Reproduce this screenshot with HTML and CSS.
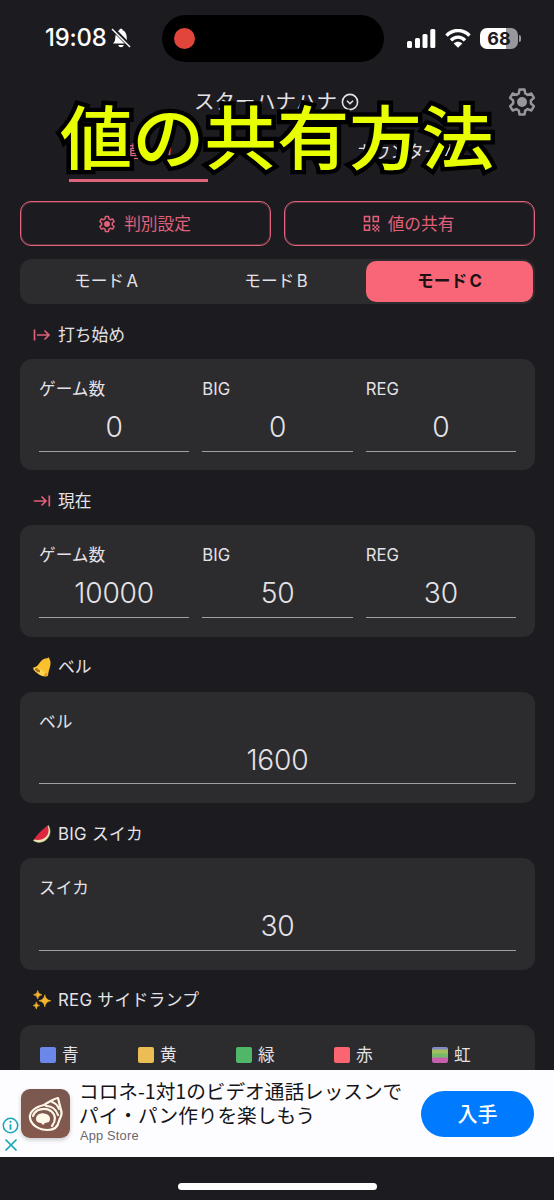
FILE: index.html
```html
<!DOCTYPE html>
<html lang="ja">
<head>
<meta charset="utf-8">
<title>スターハナハナ</title>
<link rel="stylesheet" href="styles.css">
</head>
<body>
<svg class="defs" width="0" height="0">
  <symbol id="gear" viewBox="0 0 24 24">
    <path fill="none" stroke="currentColor" stroke-width="2" stroke-linejoin="round" d="M10 2h4l.6 3.2 1.9 1.1 3-1.1 2 3.5-2.4 2.1v2.4l2.4 2.1-2 3.5-3-1.1-1.900 1.100L14 22h-4l-.6-3.200-1.900-1.100-3 1.100-2-3.500 2.400-2.100v-2.400L2.500 8.700l2-3.500 3 1.100 1.900-1.100z"/>
    <circle cx="12" cy="12" r="4" fill="currentColor"/>
  </symbol>
</svg>
<div class="phone">
  <header class="status">
    <div class="clock">19:08
      <svg width="20" height="22" viewBox="0 0 20 22"><path fill="#fff" d="M2 16.500c2-2 2.200-3.500 2.300-6.500C4.500 6 6.500 3.800 8.300 3.200 8.500 1.300 11.500 1.300 11.700 3.200c2 .7 3.900 2.800 4 6.800.1 3 .3 4.500 2.300 6.500z M7.300 18h5.400c-.4 3-5 3-5.400 0z"/><path d="M1.500 1.500l18 18" stroke="#1c1b20" stroke-width="4"/><path d="M1 2l18 18" stroke="#fff" stroke-width="1.500"/></svg>
    </div>
    <div class="island"><span class="rec"></span></div>
    <div class="signals">
      <svg width="29" height="19" viewBox="0 0 29 19" fill="#fff"><rect x="0" y="12" width="5" height="7" rx="1.500"/><rect x="8" y="9" width="5" height="10" rx="1.500"/><rect x="15.500" y="5" width="5" height="14" rx="1.500"/><rect x="23.300" y="0" width="5" height="19" rx="1.500"/></svg>
      <svg class="wifi" width="26" height="19" viewBox="0 0 26 19" fill="none" stroke="#fff" stroke-width="3.400"><path d="M1.500 6.600C8-.2 18-.2 24.500 6.600"/><path d="M6 11.300c4-4.200 10-4.200 14 0"/><path fill="#fff" stroke="none" d="M13 18.800l-4.300-4.400c2.500-2.300 6.100-2.300 8.600 0z"/></svg>
      <div class="battery">68</div><span class="nub"></span>
    </div>
  </header>
  <div class="topbar">
    <span>スターハナハナ</span>
    <svg width="18" height="18" viewBox="0 0 18 18" fill="none" stroke="#e4e2e6" stroke-width="1.600"><circle cx="9" cy="9" r="7.600"/><path d="M6 7.700l3 3 3-3"/></svg>
    <svg class="settings" width="30" height="30"><use href="#gear"/></svg>
  </div>
  <nav class="tabs"><div class="tab active"><span>数値入力</span></div><div class="tab"><span>カウンター入力</span></div></nav>
  <div class="caption">値の共有方法</div>

  <main class="content">
    <div class="actions">
      <div class="outline"><svg width="18" height="18"><use href="#gear"/></svg>判別設定</div>
      <div class="outline"><svg width="17" height="17" viewBox="0 0 17 17" fill="none" stroke="currentColor" stroke-width="1.600"><path d="M1.500 1.500h5v5h-5zM10.300 1.500h5v5h-5zM1.500 10.300h5v5h-5z"/><path fill="currentColor" stroke="none" d="M9.400 9.400h2v2h-2zM13.200 9.400h2v2h-2zM11.300 11.300h2v2h-2zM15 11.300h1.500v2H15zM9.400 13.100h2v2h-2zM13.200 13.100h2v2h-2zM11.300 15h2v1.500h-2zM15 15h1.500v1.500H15z"/></svg>値の共有</div>
    </div>
    <div class="segments"><div>モード<b>A</b></div><div>モード<b>B</b></div><div class="selected">モード<b>C</b></div></div>

    <section>
      <h2><svg class="pink" width="18" height="16" viewBox="0 0 18 16"><path d="M1.500 2.500v11M4 8h12.500M11.500 3.500L16 8l-4.500 4.500"/></svg>打ち始め</h2>
      <div class="card">
        <div class="field"><label>ゲーム数</label><output>0</output></div>
        <div class="field"><label>BIG</label><output>0</output></div>
        <div class="field"><label>REG</label><output>0</output></div>
      </div>
    </section>
    <section>
      <h2><svg class="pink" width="18" height="16" viewBox="0 0 18 16"><path d="M16.300 2.500v11M.8 8h12.500M8.500 3.500L13 8l-4.500 4.500"/></svg>現在</h2>
      <div class="card">
        <div class="field"><label>ゲーム数</label><output>10000</output></div>
        <div class="field"><label>BIG</label><output>50</output></div>
        <div class="field"><label>REG</label><output>30</output></div>
      </div>
    </section>
    <section>
      <h2><svg width="18" height="20" viewBox="0 0 18 20"><path fill="#fbc02d" d="M14.300 1.300c.7-1.400 2.300-.8 2 .8 1.300 1.500 1.500 4 .9 6.900-.8 3.400-2 6-2.200 10L.3 11c3.200-1 4.700-2.800 6.200-5C8.500 3.200 11 1.300 14.300 1.300z"/><path fill="#fdd350" d="M.3 10.700C3 10 6 11.200 9 13s5 4 5.700 6c-2 1-6 .2-9-1.800S-.3 12.500.3 10.700z"/><ellipse cx="4.500" cy="13.200" rx="3" ry="1.500" transform="rotate(32 4.500 13.200)" fill="#a87822"/><circle cx="12.900" cy="17.700" r="1.600" fill="#e79c16"/></svg>ベル</h2>
      <div class="card"><div class="field"><label>ベル</label><output>1600</output></div></div>
    </section>
    <section>
      <h2><svg width="18" height="18" viewBox="0 0 18 18"><path fill="#3f7d3c" d="M15.500 0c4 6 2 12-2.500 15.500C8.500 18.500 3 18.500 0 15.500z"/><path fill="#f3dfb5" d="M15.300.3c3.200 6 1.700 11-2.300 14.500-4 3.200-9 3.400-12.700.8z"/><path fill="#dc2742" d="M14.600.8c2 5.500.7 9.500-2.800 12-3 2.200-7 2.700-10.900 1.800C5 8.500 9 5 14.600.8z"/></svg><span class="wide">BIG スイカ</span></h2>
      <div class="card"><div class="field"><label>スイカ</label><output>30</output></div></div>
    </section>
    <section>
      <h2><svg width="19" height="20" viewBox="0 0 19 20" fill="#f9b42d" stroke="#f9b42d" stroke-width=".6"><path d="M12.500 4.500q.8 5.500 6.300 6.300-5.500.8-6.300 6.300-.8-5.500-6.300-6.300 5.500-.8 6.300-6.300zM5 0q.5 4 4.500 4.500Q5.500 5 5 9 4.500 5 .5 4.500 4.500 4 5 0zM3.500 12q.4 3.400 3.500 3.800-3.100.4-3.500 3.800Q3.100 16.200 0 15.800q3.100-.4 3.500-3.800z"/></svg><span class="wide">REG サイドランプ</span></h2>
      <div class="card lamps">
        <span><i class="blue"></i>青</span><span><i class="yellow"></i>黄</span><span><i class="green"></i>緑</span><span><i class="red"></i>赤</span><span><i class="rainbow"></i>虹</span>
      </div>
    </section>
  </main>

  <aside class="ad">
    <div class="adchoices">
      <svg width="17" height="17" viewBox="0 0 17 17" fill="none" stroke="#16a7b5" stroke-width="1.500"><circle cx="8.500" cy="8.500" r="7.200"/><path stroke-width="1.800" d="M8.500 7.200v5.500M8.500 3.800v2"/></svg>
      <svg width="14" height="14" viewBox="0 0 14 14" stroke="#16a7b5" stroke-width="1.700"><path d="M1.500 1.500l11 11M12.500 1.500l-11 11"/></svg>
    </div>
    <div class="appicon"><svg width="49" height="49" viewBox="0 0 49 49" fill="none" stroke="#fff8e8" stroke-width="2.200" stroke-linecap="round" stroke-linejoin="round"><path d="M37 9c-5 1-9 4-14 7C14 18 8 23 9 29c1 7 9 12 18 12 7 0 10-4 11-9 1-4 4-6 2-11-1-4-2-8-3-12z"/><path d="M12 27c2-7 12-9 18-5 5 4 5 10 1 15M25 17c5 0 10 3 12 9M31 13c3 1 6 4 7 7"/><path fill="#fff8e8" stroke="none" d="M15 30c0-5 6-7 10-5 4 1 5 5 3 8l-4 1-2 2-2-2c-2 0-5-1-5-4z"/></svg></div>
    <div class="adtext"><div class="adtitle">コロネ-1対1のビデオ通話レッスンで<br>パイ・パン作りを楽しもう</div><div class="store">App Store</div></div>
    <div class="get">入手</div>
  </aside>
  <footer class="home"><span></span></footer>
</div>
</body>
</html>
```
FILE: styles.css
```css
* { box-sizing: border-box; }
body { margin: 0; background: #1c1b20; }
.defs { position: absolute; }
.phone {
  position: relative;
  display: flex;
  flex-direction: column;
  width: 554px;
  height: 1200px;
  overflow: hidden;
  background: #1c1b20;
  color: #e4e2e6;
  font: 400 16.7px/24px Inter, "Noto Sans CJK JP", sans-serif;
}
svg { display: block; flex: none; }

.status { display: flex; align-items: center; height: 76px; flex: none; padding-left: 45px; }
.clock { display: flex; align-items: center; gap: 5px; width: 117px; color: #fff; font-size: 23.800px; font-weight: 550; letter-spacing: -.2px; }
.island { width: 222px; height: 47px; border-radius: 24px; background: #000; padding: 13px 12px; }
.rec { display: block; width: 21px; height: 21px; border-radius: 50%; background: #e2453a; }
.signals { display: flex; align-items: center; margin-left: 23px; }
.wifi { margin-left: 9px; }
.battery { width: 38px; height: 21px; margin-left: 9px; border-radius: 7px; background: linear-gradient(90deg, #fff 68%, #98979b 68%); color: #1c1b20; font-size: 18px; font-weight: 700; line-height: 21px; text-align: center; }
.nub { width: 2px; height: 7px; margin-left: 1px; border-radius: 0 2px 2px 0; background: #98979b; }

.topbar { display: flex; align-items: center; height: 52px; flex: none; padding-left: 194px; font-size: 20.500px; }
.topbar span { width: 147px; white-space: nowrap; }
.settings { margin-left: 148px; color: #98979b; }
.tabs { display: flex; flex: none; height: 54px; }
.tab { flex: 1; display: flex; justify-content: center; padding-top: 12px; }
.tab span { height: 42px; font-size: 16.800px; }
.active { color: #e8627a; }
.active span { display: flex; justify-content: center; width: 139px; border-bottom: 3px solid #e0647e; }
.caption {
  position: absolute;
  left: 60px;
  top: 82px;
  font: 500 72.300px/104px "Noto Sans CJK JP", sans-serif;
  color: #e8ff00;
  -webkit-text-stroke: 9px #000;
  paint-order: stroke fill;
  white-space: nowrap;
  transform: scaleY(.96);
}

.content { flex: 1; min-height: 0; overflow: hidden; padding: 19px 19px 0 20px; }
.actions { display: grid; grid-template-columns: 1fr 1fr; gap: 13px; }
.outline { display: flex; align-items: center; justify-content: center; gap: 8px; height: 45px; padding-right: 2px; border: 1px solid #e0647c; box-shadow: inset 0 0 0 1px #e0647c50; border-radius: 11px; color: #e0607a; }
.segments { display: grid; grid-template-columns: 168px 176px 167px; height: 45px; margin-top: 13px; padding: 2px; border-radius: 12px; background: #2c2b2e; text-align: center; line-height: 40px; }
.segments div:nth-child(2) { padding-right: 4px; }
.segments b { margin-left: 2.500px; font-weight: inherit; }
.selected { height: 41px; border-radius: 10px; background: #f86678; color: #1c1216; font-weight: 700; }

section { height: 166.400px; }
h2 { display: flex; align-items: center; gap: 7px; height: 55px; margin: 0; padding: 6px 0 0 13px; font-size: 16.800px; font-weight: 400; }
h2 svg { width: 18px; }
.wide { letter-spacing: .3px; }
.pink { fill: none; stroke: #e0607a; stroke-width: 1.700; }
.card { display: flex; gap: 13px; height: 111.400px; padding: 18px 19px 0; border-radius: 12px; background: #2c2b2e; }
.field { flex: 1; height: 74.500px; display: flex; flex-direction: column; border-bottom: 1px solid #a09fa2; }
output { margin-top: 8px; font-size: 28.200px; font-weight: 350; line-height: 37px; letter-spacing: -.2px; text-align: center; }
.lamps { display: grid; grid-template-columns: repeat(5, 98px); gap: 0; padding: 17px 0 0 20px; }
.lamps span { display: flex; align-items: center; gap: 6px; height: 26px; }
.lamps i { width: 16px; height: 16px; border-radius: 2px; }
.blue { background: #6c87ea; }
.yellow { background: #edbd55; }
.green { background: #50b768; }
.red { background: #fa6570; }
.rainbow { background: linear-gradient(#8789c4 0 12%, #a1bf5e 20% 38%, #73bc68 46% 62%, #c75fae 70%); }

.ad { display: flex; align-items: center; flex: none; height: 87px; padding-right: 20px; background: #fdfcff; color: #151519; }
.adchoices { display: flex; flex-direction: column; align-items: center; gap: 4px; width: 21px; padding-top: 41px; }
.appicon { width: 49px; height: 49px; border-radius: 9px; background: linear-gradient(#795850, #85594c); box-shadow: 0 2px 4px #0003; }
.adtext { flex: 1; padding: 0 0 3px 9px; }
.adtitle { font-family: "Noto Sans CJK JP", sans-serif; font-size: 19.650px; line-height: 23.500px; white-space: nowrap; }
.store { margin: 1px 0 0 1px; color: #69686c; font: 12.800px/18px "Liberation Sans", sans-serif; letter-spacing: .2px; }
.get { width: 113px; height: 46px; border-radius: 23px; background: #007aff; color: #fff; font: 500 20px/46px "Noto Sans CJK JP", sans-serif; text-align: center; }
.home { display: flex; justify-content: center; flex: none; height: 43px; padding-top: 26px; }
.home span { width: 199px; height: 7px; border-radius: 4px; background: #fff; }
```
